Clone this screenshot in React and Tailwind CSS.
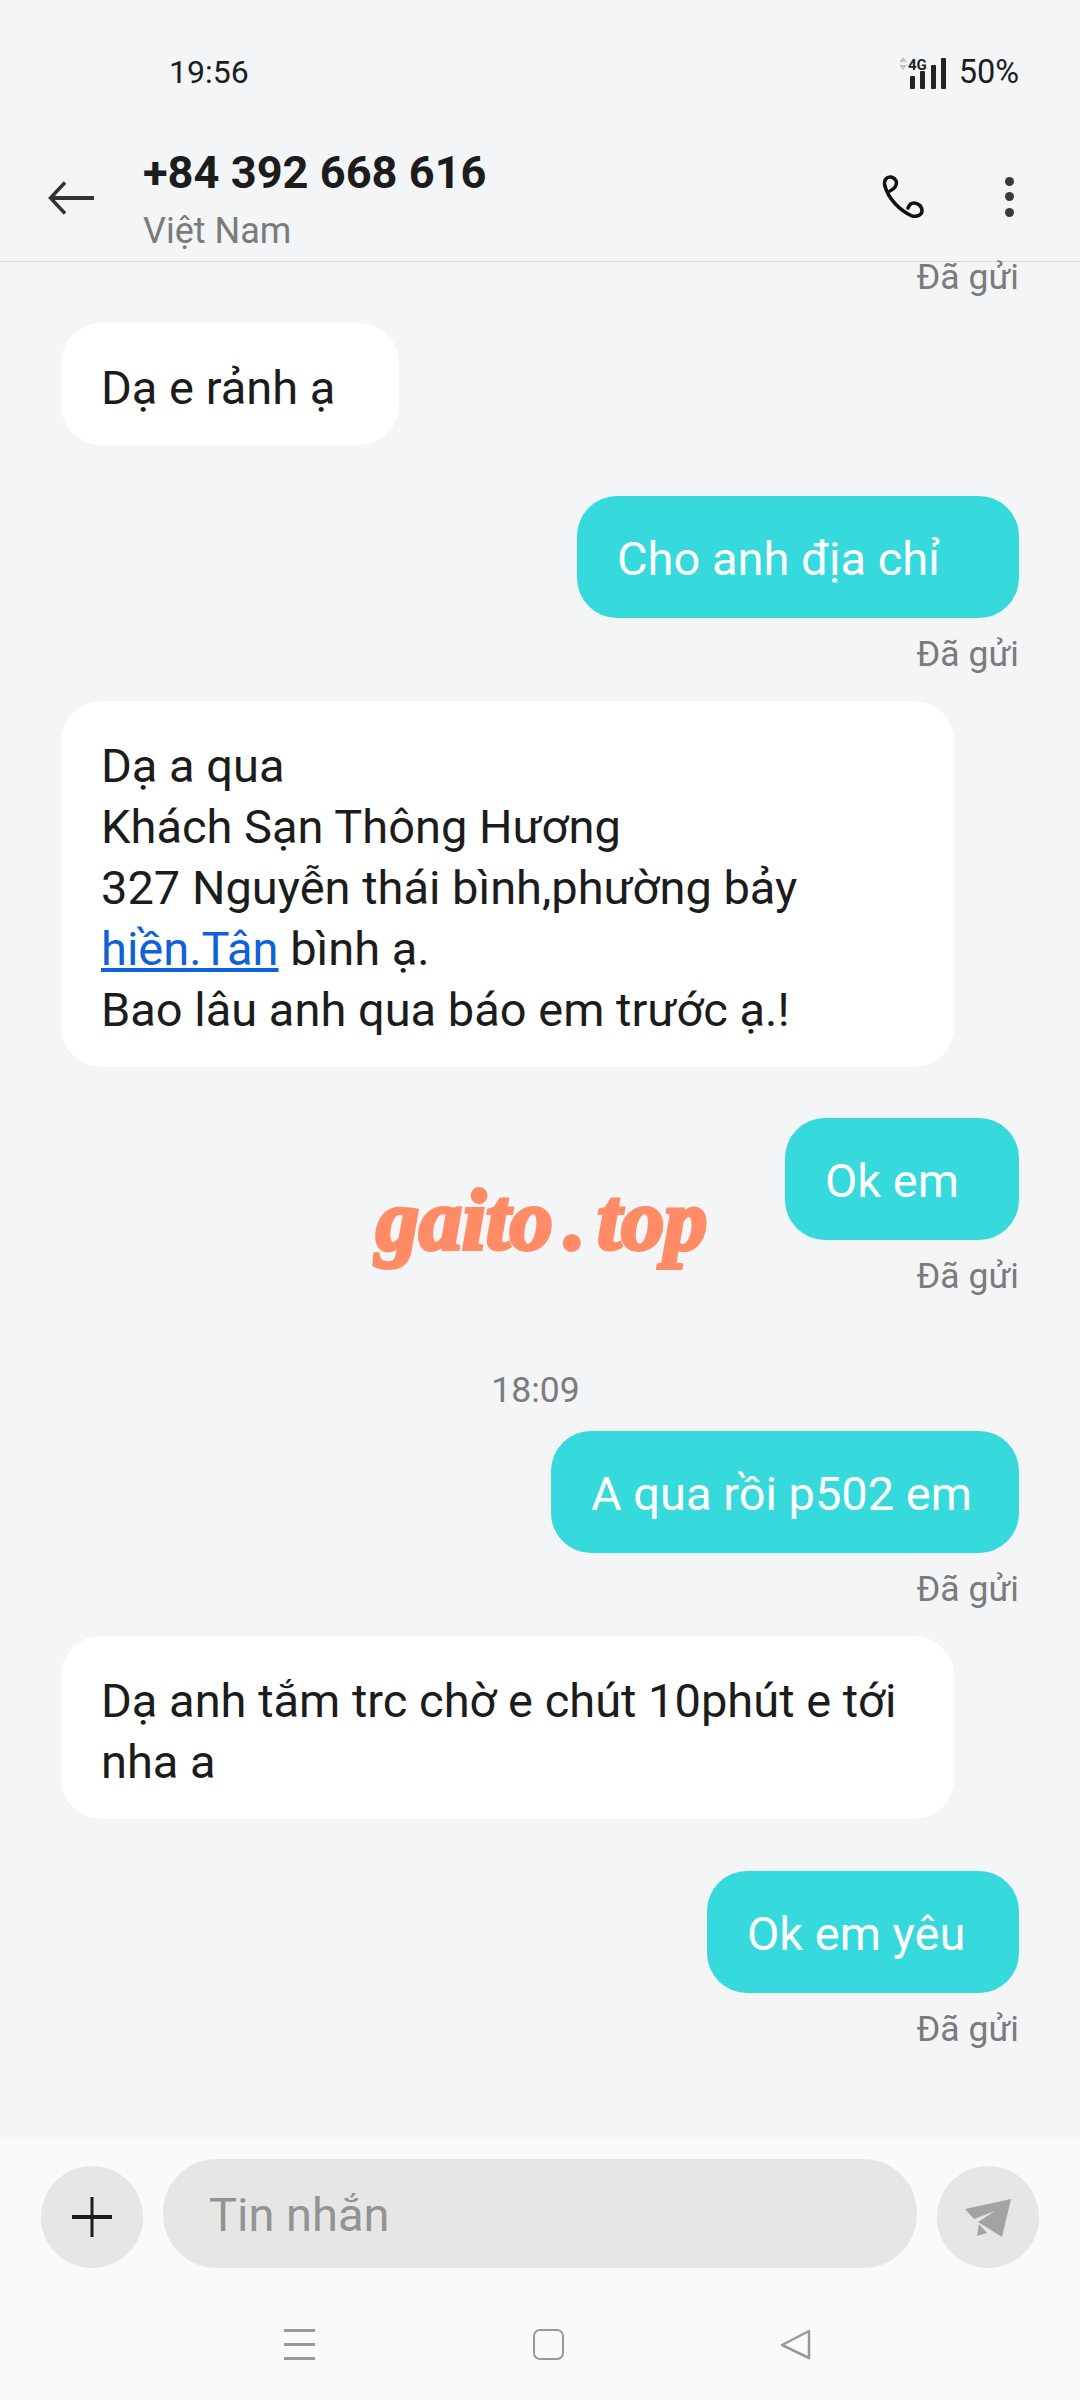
const font = { fontFamily: '"Roboto", "Noto Sans", sans-serif' };

function Sent({ first }) {
  return <div className={`text-right text-[35.5px] ${first ? "leading-[30px]" : "leading-[40px]"} text-[#7b7b7b] pr-[61px]`}>Đã gửi</div>;
}

function Out({ w, children }) {
  return (
    <div className="flex justify-end pr-[61px]">
      <div className={`${w} h-[122px] rounded-[40px] bg-[#36d9dc] pl-[40px] text-[47px] leading-[126px] text-white whitespace-nowrap`}>{children}</div>
    </div>
  );
}

function In({ w, children }) {
  return (
    <div className="pl-[61px]">
      <div className={`${w} rounded-[40px] bg-white pl-[40px] pt-[34px] pb-[27px] text-[47px] leading-[61px] text-[#1c1c1c] whitespace-nowrap`}>{children}</div>
    </div>
  );
}

export default function App() {
  return (
    <div style={font} className="relative w-[1080px] h-[2400px] bg-[#f3f5f7] flex flex-col overflow-hidden">
      <div className="h-[261px] shrink-0 flex flex-col">
        <div className="h-[146px] flex items-start justify-between pt-[52px] pl-[169px] pr-[61px]">
          <span className="text-[32px] leading-[40px] text-[#1c1c1c]">19:56</span>
          <div className="flex items-center gap-[12px] h-[40px]">
            <svg width="52" height="34" viewBox="0 0 52 34">
              <path d="M4 7l4-5 4 5zM4 10l4 5 4-5z" fill="#c4c4c4" />
              <rect x="15" y="21" width="5" height="13" rx="1" fill="#222" />
              <rect x="25" y="16" width="5" height="18" rx="1" fill="#222" />
              <rect x="36" y="10" width="5" height="24" rx="1" fill="#222" />
              <rect x="46" y="3" width="5" height="31" rx="1" fill="#222" />
              <text x="13" y="15" fontSize="15" fontWeight="700" fill="#222" fontFamily="Roboto">4G</text>
            </svg>
            <span className="text-[32.5px] leading-[40px] text-[#1c1c1c]">50%</span>
          </div>
        </div>
        <div className="relative flex items-start justify-between pl-[48px] pr-[66px] -mt-[1px]">
          <div className="flex items-start">
            <svg className="mt-[36px]" width="46" height="34" viewBox="0 0 46 34" fill="none" stroke="#333" strokeWidth="3.5">
              <path d="M17 1.5L2.5 17 17 32.5" />
              <path d="M3 17H46" strokeWidth="4" />
            </svg>
            <div className="ml-[49px]">
              <div className="text-[45.2px] leading-[56px] font-bold text-[#1c1c1c]">+84 392 668 616</div>
              <div className="text-[36px] leading-[44px] text-[#7b7b7b] mt-[8px]">Việt Nam</div>
            </div>
          </div>
          <div className="flex items-start mt-[30px]">
            <svg width="42" height="43" viewBox="0 0 42 43" fill="none" stroke="#111" strokeWidth="3.5" strokeLinecap="round" strokeLinejoin="round">
              <path d="M3 11C1 5 5 1.5 9 2c5 1 7 6 4 10-1 2-3 3-5 4" />
              <path d="M3 11c3 12 14 24 27 30 5 1 10-1 10-5 0-5-4-8-8-8-3 0-5 2-6 5" />
            </svg>
            <div className="ml-[81px] pt-[1.5px] flex flex-col gap-[6.5px]">
              <div className="w-[9px] h-[9px] rounded-full bg-[#3a3a3a]" />
              <div className="w-[9px] h-[9px] rounded-full bg-[#3a3a3a]" />
              <div className="w-[9px] h-[9px] rounded-full bg-[#3a3a3a]" />
            </div>
          </div>
        </div>
      </div>
      <div className="h-[1px] shrink-0 bg-[#d8d8d8]" />

      <div className="flex-1">
        <Sent first />
        <div className="mt-[31px]"><In w="w-[338px]">Dạ e rảnh ạ</In></div>
        <div className="mt-[51px]"><Out w="w-[442px]">Cho anh địa chỉ</Out></div>
        <div className="mt-[16px]"><Sent /></div>
        <div className="mt-[27px]">
          <In w="w-[893px]">Dạ a qua<br />Khách Sạn Thông Hương<br />327 Nguyễn thái bình,phường bảy<br /><span className="text-[#0f62d6] underline">hiền.Tân</span> bình ạ.<br />Bao lâu anh qua báo em trước ạ.!</In>
        </div>
        <div className="mt-[51px]"><Out w="w-[234px]">Ok em</Out></div>
        <div className="mt-[16px]"><Sent /></div>
        <div className="mt-[74px] pr-[9px] text-center text-[35.5px] leading-[40px] text-[#7b7b7b]">18:09</div>
        <div className="mt-[21px]"><Out w="w-[468px]">A qua rồi p502 em</Out></div>
        <div className="mt-[16px]"><Sent /></div>
        <div className="mt-[27px]"><In w="w-[893px]">Dạ anh tắm trc chờ e chút 10phút e tới<br />nha a</In></div>
        <div className="mt-[52px]"><Out w="w-[312px]">Ok em yêu</Out></div>
        <div className="mt-[16px]"><Sent /></div>
      </div>

      <div className="h-[261px] shrink-0 bg-[#fafafa]">
        <div className="flex items-start pl-[41px] pt-[20px]">
          <div className="mt-[7px] w-[102px] h-[102px] rounded-full bg-[#e6e6e6] flex items-center justify-center">
            <svg width="40" height="40" viewBox="0 0 40 40"><rect x="0" y="18" width="40" height="4" fill="#1c1c1c" /><rect x="18.5" y="0" width="3" height="40" fill="#1c1c1c" /></svg>
          </div>
          <div className="ml-[20px] w-[754px] h-[109px] rounded-[54px] bg-[#e6e6e6] pl-[46px] text-[47px] leading-[112px] text-[#939393]">Tin nhắn</div>
          <div className="ml-[20px] mt-[7px] w-[102px] h-[102px] rounded-full bg-[#e6e6e6] flex items-center justify-center">
            <svg className="mt-[4px]" width="56" height="48" viewBox="0 0 56 48" fill="#a3a3a3">
              <path d="M51 4L5 14 14 24 35 16 18 27 42 42z" />
              <path d="M19 29L27 38 17 41z" />
            </svg>
          </div>
        </div>
        <div className="flex items-start pl-[284px] mt-[61px]">
          <div className="w-[31px] h-[31px] flex flex-col justify-between">
            <div className="h-[3px] bg-[#999]" /><div className="h-[3px] bg-[#999]" /><div className="h-[3px] bg-[#999]" />
          </div>
          <div className="ml-[218px] w-[31px] h-[31px] rounded-[7px] border-[2.5px] border-[#999]" />
          <svg className="ml-[216px]" width="31" height="31" viewBox="0 0 31 31" fill="none" stroke="#999" strokeWidth="2.5" strokeLinejoin="round">
            <path d="M29 2v27L2 16z" />
          </svg>
        </div>
      </div>

      <div className="absolute left-[376px] top-[1160px] text-[86px] leading-[120px] font-bold italic text-[#ff8c66] whitespace-nowrap [word-spacing:-10px] [-webkit-text-stroke:4px_#ff8c66]" style={{ fontFamily: '"Liberation Serif", serif' }}>gaito . top</div>
    </div>
  );
}
